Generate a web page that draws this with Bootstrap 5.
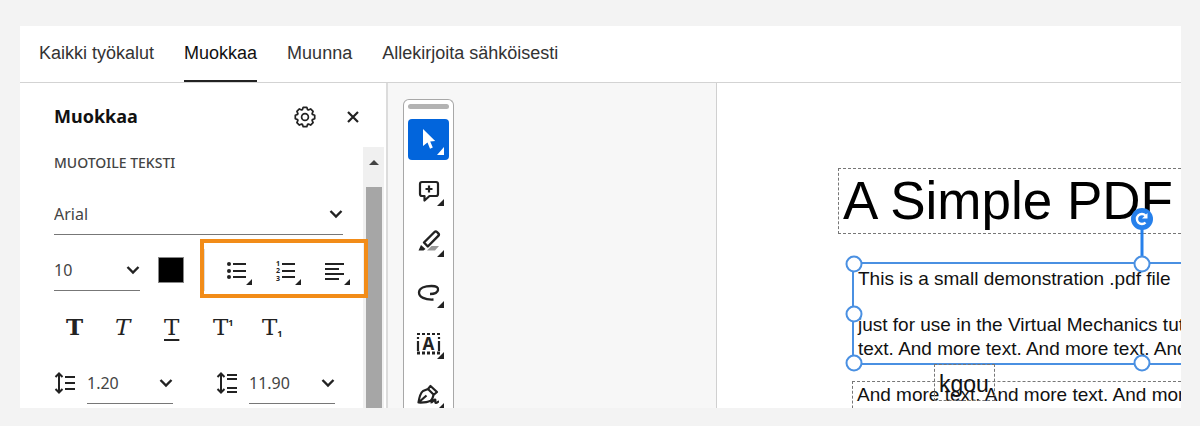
<!DOCTYPE html>
<html lang="fi">
<head>
<meta charset="utf-8">
<meta name="viewport" content="width=device-width, initial-scale=1">
<title>Muokkaa</title>
<link href="https://cdn.jsdelivr.net/npm/bootstrap@5.3.0/dist/css/bootstrap.min.css" rel="stylesheet">
<style>
  body { background: #f3f3f3; color: #222; font-family: "Noto Sans", sans-serif; font-size: 16px; }
  .frame { padding: 26px 19px 18px 20px; }
  button { background: none; border: 0; padding: 0; color: inherit; }
  svg { display: block; }

  .app-tabs { height: 57px; gap: 30px; padding-left: 19px; border-bottom: 1px solid #d3d3d3; font-family: "Liberation Sans", sans-serif; font-size: 18px; }
  .app-tabs a { color: #333; text-decoration: none; line-height: 54px; border-bottom: 2px solid transparent; white-space: nowrap; }
  .app-tabs a.active { color: #111; border-color: #222; }

  .side { width: 368px; border-right: 2px solid #dcdcdc; }
  .side-head { height: 64px; padding: 4px 21px 0 34px; }
  .side-head h1 { font-size: 18px; font-weight: 700; color: #111; }
  .side-head button { width: 24px; height: 24px; }
  .side-body { padding: 0 20px 0 34px; }
  .side-body h2 { font-size: 14px; line-height: 32px; font-weight: 500; color: #444; margin-bottom: 14px; }
  .pick { height: 42px; padding: 0; border: 0; border-bottom: 1px solid #777; border-radius: 0; color: #444;
    background: url("data:image/svg+xml,%3Csvg xmlns='http://www.w3.org/2000/svg' width='14' height='10'%3E%3Cpath d='M1.500 2l5.500 5.500L12.500 2' fill='none' stroke='%23222' stroke-width='2.400'/%3E%3C/svg%3E") no-repeat right 0 center; }
  .pick-sm { width: 86px; }
  .size-row { margin-top: 14px; }
  .swatch { width: 26px; height: 26px; padding: 0; background: #000; border: 1px solid #888; margin: 0 20px 0 18px; }
  .para-tools { height: 42px; gap: 21px; padding-left: 21px; border-left: 1px solid #ddd; margin-right: -20px; }
  .callout { inset: -10px -5px -7px -5px; border: 4px solid #f28c18; pointer-events: none; z-index: 2; }
  .glyphs { height: 28px; margin: 22px 0 21px; gap: 21px; padding-left: 7px; font-family: "DejaVu Serif", serif; font-size: 23px; line-height: 28px; }
  .glyphs button { width: 28px; text-align: left; white-space: nowrap; line-height: 28px; padding-left: 5px; }
  .glyphs u { text-underline-offset: 4px; text-decoration-thickness: 2px; }
  .glyphs sup, .glyphs sub { font: 700 9px "Noto Sans", sans-serif; }
  .glyphs sup { top: -9px; }
  .spacing-icon { width: 33px; }

  .scroll { width: 21px; background: #f0f0f0; padding-top: 9px; margin-right: 2px; }
  .scroll i { width: 16px; margin: 22px 2px 0 3px; background: #a6a6a6; }

  .canvas { background: #f7f7f7; }
  .rail { width: 51px; margin: 16px 262px 0 15px; padding: 4px 4px 0; background: #fff; border: 1px solid #a8a8a8; border-bottom: 0; border-radius: 6px 6px 0 0; }
  .rail .grip { height: 5px; border-radius: 3px; background: #b3b3b3; margin-bottom: 10px; }
  .rail-list { gap: 10px; }
  .rail button { width: 41px; height: 41px; border-radius: 4px; }
  .rail .active { background: #0265dc; color: #fff; }

  .sheet { background: #fff; border-left: 1px solid #d0d0d0; color: #111; font-family: "Liberation Sans", sans-serif; font-size: 19px; line-height: 24px; padding: 85px 0 0 121px; min-width: 0; }
  .sheet p { white-space: nowrap; margin: 0; }
  .outline { border: 1px dashed #777; border-right: 0; }
  .doc-title { font-size: 53px; line-height: 64px; font-weight: 400; color: #000; white-space: nowrap; padding-left: 4px; margin: 0; }
  .picked { width: 580px; margin: 28px 0 0 14px; padding: 3px 0 0 4px; border: 2px solid #4a90e2; }
  .picked p:first-of-type { margin-bottom: 22px; }
  .picked p:last-of-type { margin-bottom: 2px; }
  .knob { width: 17px; height: 17px; border: 2px solid #4a90e2; border-radius: 50%; background: #fff; transform: translate(-50%, -50%); }
  .stem { width: 22px; height: 56px; bottom: 100%; left: 50%; transform: translateX(-50%); }
  .follow { margin: 16px 0 0 14px; padding: 1px 0 20px 4px; }
  .note { top: -18px; left: 81px; width: 61px; height: 37px; font-size: 23px; line-height: 38px; padding-left: 4px; border: 1px dashed #777; }
</style>
</head>
<body>
<div class="frame vh-100 d-flex flex-column overflow-hidden">
  <div class="bg-white d-flex flex-column flex-grow-1 overflow-hidden">
    <nav class="app-tabs d-flex flex-shrink-0">
      <a href="#">Kaikki työkalut</a>
      <a href="#" class="active" aria-current="page">Muokkaa</a>
      <a href="#">Muunna</a>
      <a href="#">Allekirjoita sähköisesti</a>
    </nav>
    <div class="d-flex flex-grow-1 overflow-hidden">
      <aside class="side d-flex flex-column flex-shrink-0">
        <header class="side-head d-flex align-items-center flex-shrink-0">
          <h1 class="m-0 me-auto">Muokkaa</h1>
          <button type="button" class="me-4" aria-label="Asetukset">
            <svg width="24" height="24" viewBox="-12 -12 24 24" fill="none" stroke="#222" stroke-width="1.700" stroke-linejoin="round"><path d="M-2.600-7.400L-1.800-9.700 1.800-9.700 2.600-7.400 3.400-7.100 5.600-8.100 8.100-5.600 7.100-3.400 7.400-2.600 9.700-1.800 9.700 1.800 7.400 2.600 7.100 3.400 8.100 5.600 5.600 8.100 3.400 7.100 2.600 7.400 1.800 9.700 -1.800 9.700 -2.600 7.400 -3.400 7.100 -5.600 8.100 -8.100 5.600 -7.100 3.400 -7.400 2.600 -9.700 1.800 -9.700-1.800 -7.400-2.600 -7.100-3.400 -8.100-5.600 -5.600-8.100 -3.400-7.100Z"/><circle r="3.400"/></svg>
          </button>
          <button type="button" aria-label="Sulje">
            <svg width="24" height="24" stroke="#222" stroke-width="2.200"><path d="M7 7l10 10M17 7L7 17"/></svg>
          </button>
        </header>
        <div class="d-flex flex-grow-1">
          <div class="side-body flex-grow-1">
            <h2>MUOTOILE TEKSTI</h2>
            <select class="pick form-select" aria-label="Fontti"><option>Arial</option></select>
            <div class="size-row d-flex align-items-center">
              <select class="pick pick-sm form-select" aria-label="Fonttikoko"><option>10</option></select>
              <button type="button" class="swatch flex-shrink-0" aria-label="Väri"></button>
              <div class="para-tools d-flex align-items-center position-relative flex-grow-1">
                <button type="button" aria-label="Luettelomerkit">
                  <svg width="28" height="30" fill="#222"><path d="M7 8h13v2H7zM7 15h13v2H7zM7 21h13v2H7zM26 24v6h-6z"/><circle cx="3" cy="9" r="2"/><circle cx="3" cy="16" r="2"/><circle cx="3" cy="22" r="2"/></svg>
                </button>
                <button type="button" aria-label="Numeroitu luettelo">
                  <svg width="28" height="30" fill="#222"><path d="M7 8h13v2H7zM7 15h13v2H7zM7 21h13v2H7zM26 24v6h-6z"/><g font-family="Noto Sans, sans-serif" font-size="7" font-weight="700"><text x="1" y="11">1</text><text x="1" y="18">2</text><text x="1" y="26">3</text></g></svg>
                </button>
                <button type="button" aria-label="Tasaus">
                  <svg width="28" height="30" fill="#222"><path d="M1 8h19v2H1zM1 13h14v2H1zM1 18h19v2H1zM1 23h14v2H1zM26 24v6h-6z"/></svg>
                </button>
                <span class="callout position-absolute"></span>
              </div>
            </div>
            <div class="glyphs d-flex">
              <button type="button" aria-label="Lihavointi"><b>T</b></button>
              <button type="button" aria-label="Kursivointi"><i>T</i></button>
              <button type="button" aria-label="Alleviivaus"><u>T</u></button>
              <button type="button" aria-label="Yläindeksi">T<sup>1</sup></button>
              <button type="button" aria-label="Alaindeksi">T<sub>1</sub></button>
            </div>
            <div class="d-flex align-items-center">
              <svg class="spacing-icon flex-shrink-0" height="24" fill="none" stroke="#222" stroke-width="2"><path d="M5 3v18M1.500 6L5 2.500 8.500 6M1.500 18L5 21.500 8.500 18M11 6h10M11 12h10M11 18h10"/></svg>
              <select class="pick pick-sm form-select" aria-label="Riviväli"><option>1.20</option></select>
              <svg class="spacing-icon flex-shrink-0 ms-auto" height="24" fill="none" stroke="#222" stroke-width="2"><path d="M5 3v18M1.500 6L5 2.500 8.500 6M1.500 18L5 21.500 8.500 18M11 4h10M11 8h10M11 17h10M11 21h10"/></svg>
              <select class="pick pick-sm form-select me-2" aria-label="Kappaleväli"><option>11.90</option></select>
            </div>
          </div>
          <div class="scroll d-flex flex-column flex-shrink-0" aria-hidden="true">
            <svg width="21" height="9" viewBox="0 -3 21 9" overflow="visible" fill="#444"><path d="M6 6l5-5 5 5z"/></svg>
            <i class="flex-grow-1"></i>
          </div>
        </div>
      </aside>
      <main class="canvas d-flex flex-grow-1 overflow-hidden">
        <div class="rail flex-shrink-0">
          <div class="grip"></div>
          <div class="rail-list d-flex flex-column">
            <button type="button" class="active" aria-label="Valitse">
              <svg width="41" height="41" fill="#fff"><path d="M15 10v17l4.500-3.500 2.500 6.300 2.800-1.200-2.600-6 5-.6zM36 28v8h-7z"/></svg>
            </button>
            <button type="button" aria-label="Kommentti">
              <svg width="41" height="41" fill="none" stroke="#222" stroke-width="2.200"><path d="M14 12h14a2 2 0 0 1 2 2v10a2 2 0 0 1-2 2h-6.500l-5 4.500V26H14a2 2 0 0 1-2-2V14a2 2 0 0 1 2-2zM21 15.500v7M17.500 19h7" stroke-linejoin="round"/><path d="M36 29v7h-7z" fill="#222" stroke="none"/></svg>
            </button>
            <button type="button" aria-label="Korostus">
              <svg width="41" height="41" fill="#222"><path d="M19 29.500l4.500-4.500H31l-4 4.500z" fill="#999"/><path d="M16 21.500L26.500 11a1.800 1.800 0 0 1 2.500 0l1.300 1.300a1.800 1.800 0 0 1 0 2.500L19.800 25.500z" fill="#fff" stroke="#222" stroke-width="2.400" stroke-linejoin="round"/><path d="M13 24l4.500 4-2 1.500h-5zM36 29v7h-7z"/></svg>
            </button>
            <button type="button" aria-label="Piirrä">
              <svg width="41" height="41" fill="none" stroke="#222" stroke-width="2.300"><path d="M25.500 27.500C17 28 11 25 11 20.500S17 14 23.500 14c5 0 7 1.500 6.500 4-.5 3-4 4-8 4"/><path d="M36 29v7h-7z" fill="#222" stroke="none"/></svg>
            </button>
            <button type="button" aria-label="Tekstialue">
              <svg width="41" height="41" fill="none" stroke="#222" stroke-width="2.200"><path d="M9 11h23" stroke-dasharray="3 2"/><path d="M9 30h23" stroke-width="3" stroke-dasharray="3 2"/><path d="M10 14v14M31 14v14" stroke-dasharray="2 2 10 2"/><text x="20.500" y="26.500" text-anchor="middle" font-family="Noto Sans, sans-serif" font-weight="700" font-size="17" fill="#222" stroke="none">A</text><path d="M36 29v7h-7z" fill="#222" stroke="none"/></svg>
            </button>
            <button type="button" aria-label="Allekirjoita">
              <svg width="41" height="41" fill="none" stroke="#222" stroke-width="2.200" stroke-linejoin="round"><path d="M10.500 28.500c.8-5.500 2-9.500 4.500-11.500l5-2 5.500 5.500c-.5 3-1 5-3 6.200-3 1.600-7 2-12 1.800zM10.500 28.500l8-7M20 15l2.500-3 6.500 6-3.500 3M22.500 28.500c2 0 3.500-3 4.500-3s-.5 3.500 1 3.500 1.500-1.500 3-1.500"/><path d="M36 29v7h-7z" fill="#222" stroke="none"/></svg>
            </button>
          </div>
        </div>
        <article class="sheet flex-grow-1 overflow-hidden">
          <h2 class="doc-title outline">A Simple PDF</h2>
          <div class="picked position-relative">
            <p>This is a small demonstration .pdf file</p>
            <p>just for use in the Virtual Mechanics tutorials. More<br>text. And more text. And more text. And more text.</p>
            <svg class="stem position-absolute" fill="none"><path d="M11 20v36" stroke="#2680eb" stroke-width="3"/><circle cx="11" cy="11" r="11" fill="#2680eb"/><path d="M14.500 14.500a5 5 0 1 1 0-7" stroke="#fff" stroke-width="2.400"/><path d="M16.500 5v5.500H11z" fill="#fff"/></svg>
            <span class="knob position-absolute top-0 start-0"></span>
            <span class="knob position-absolute top-0 start-50"></span>
            <span class="knob position-absolute top-50 start-0"></span>
            <span class="knob position-absolute top-100 start-0"></span>
            <span class="knob position-absolute top-100 start-50"></span>
          </div>
          <div class="follow outline position-relative">
            <p>And more text. And more text. And more text.</p>
            <span class="note position-absolute">kgou</span>
          </div>
        </article>
      </main>
    </div>
  </div>
</div>
<script src="https://cdn.jsdelivr.net/npm/bootstrap@5.3.0/dist/js/bootstrap.bundle.min.js"></script>
</body>
</html>
